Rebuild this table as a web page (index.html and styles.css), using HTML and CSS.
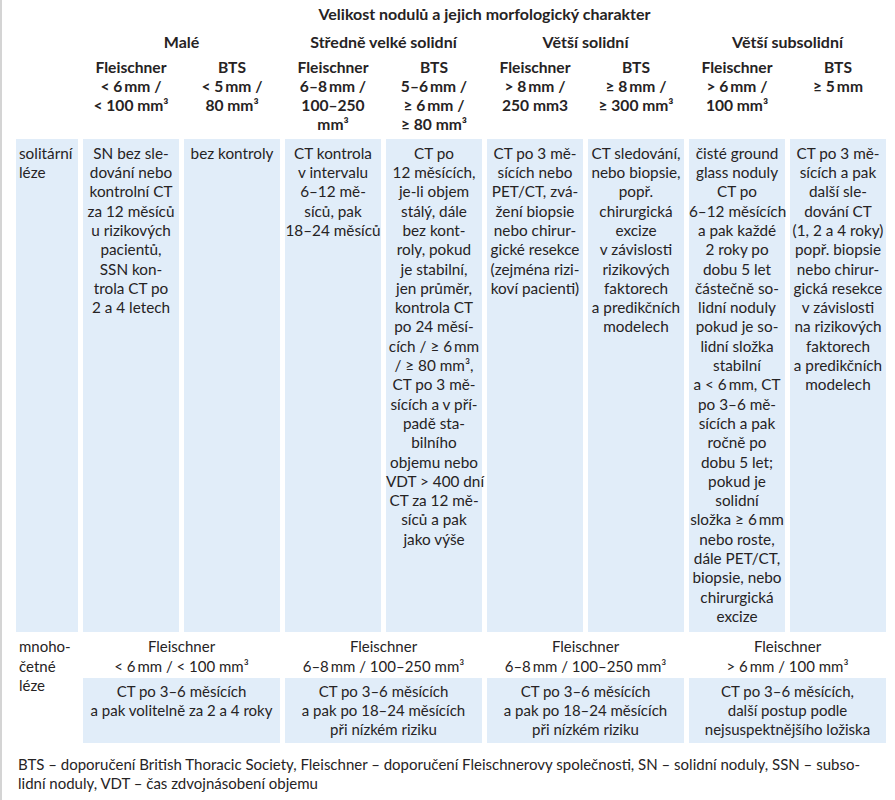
FILE: index.html
```html
<!DOCTYPE html>
<html lang="cs">
<head>
<meta charset="utf-8">
<title>Velikost nodulů</title>
<link rel="stylesheet" href="styles.css">
</head>
<body>
<div class="page">
  <div class="grid">
    <div class="title span2-9">Velikost nodulů a jejich morfologický charakter</div>

    <div class="group c2">Malé</div>
    <div class="group c4">Středně velké solidní</div>
    <div class="group c6">Větší solidní</div>
    <div class="group c8">Větší subsolidní</div>

    <div class="sub c2s">Fleischner<br>&lt; 6&thinsp;mm /<br>&lt; 100 mm³</div>
    <div class="sub">BTS<br>&lt; 5&thinsp;mm /<br>80 mm³</div>
    <div class="sub">Fleischner<br>6–8&thinsp;mm /<br>100–250<br>mm³</div>
    <div class="sub">BTS<br>5–6&thinsp;mm /<br>≥ 6&thinsp;mm /<br>≥ 80 mm³</div>
    <div class="sub">Fleischner<br>&gt; 8&thinsp;mm /<br>250 mm3</div>
    <div class="sub">BTS<br>≥ 8&thinsp;mm /<br>≥ 300 mm³</div>
    <div class="sub">Fleischner<br>&gt; 6&thinsp;mm /<br>100 mm³</div>
    <div class="sub">BTS<br>≥ 5&thinsp;mm</div>

    <div class="cell label">solitární<br>léze</div>
    <div class="cell">SN bez sle-<br>dování nebo<br>kontrolní CT<br>za 12 měsíců<br>u rizikových<br>pacientů,<br>SSN kon-<br>trola CT po<br>2 a 4 letech</div>
    <div class="cell">bez kontroly</div>
    <div class="cell">CT kontrola<br>v intervalu<br>6–12 mě-<br>síců, pak<br>18–24 měsíců</div>
    <div class="cell">CT po<br>12 měsících,<br>je-li objem<br>stálý, dále<br>bez kont-<br>roly, pokud<br>je stabilní,<br>jen průměr,<br>kontrola CT<br>po 24 měsí-<br>cích / ≥ 6&thinsp;mm<br>/ ≥ 80 mm³,<br>CT po 3 mě-<br>sících a v pří-<br>padě sta-<br>bilního<br>objemu nebo<br>VDT &gt; 400 dní<br>CT za 12 mě-<br>síců a pak<br>jako výše</div>
    <div class="cell">CT po 3 mě-<br>sících nebo<br>PET/CT, zvá-<br>žení biopsie<br>nebo chirur-<br>gické resekce<br>(zejména rizi-<br>koví pacienti)</div>
    <div class="cell">CT sledování,<br>nebo biopsie,<br>popř.<br>chirurgická<br>excize<br>v závislosti<br>rizikových<br>faktorech<br>a predikčních<br>modelech</div>
    <div class="cell">čisté ground<br>glass noduly<br>CT po<br>6–12 měsících<br>a pak každé<br>2 roky po<br>dobu 5 let<br>částečně so-<br>lidní noduly<br>pokud je so-<br>lidní složka<br>stabilní<br>a &lt; 6&thinsp;mm, CT<br>po 3–6 mě-<br>sících a pak<br>ročně po<br>dobu 5 let;<br>pokud je<br>solidní<br>složka ≥ 6&thinsp;mm<br>nebo roste,<br>dále PET/CT,<br>biopsie, nebo<br>chirurgická<br>excize</div>
    <div class="cell">CT po 3 mě-<br>sících a pak<br>další sle-<br>dování CT<br>(1, 2 a 4 roky)<br>popř. biopsie<br>nebo chirur-<br>gická resekce<br>v závislosti<br>na rizikových<br>faktorech<br>a predikčních<br>modelech</div>

    <div class="mlabel">mnoho-<br>četné<br>léze</div>
    <div class="mhead c2">Fleischner<br>&lt; 6&thinsp;mm / &lt; 100 mm³</div>
    <div class="mhead c4">Fleischner<br>6–8&thinsp;mm / 100–250 mm³</div>
    <div class="mhead c6">Fleischner<br>6–8&thinsp;mm / 100–250 mm³</div>
    <div class="mhead c8">Fleischner<br>&gt; 6&thinsp;mm / 100 mm³</div>

    <div class="mcell c2">CT po 3–6 měsících<br>a pak volitelně za 2 a 4 roky</div>
    <div class="mcell c4">CT po 3–6 měsících<br>a pak po 18–24 měsících<br>při nízkém riziku</div>
    <div class="mcell c6">CT po 3–6 měsících<br>a pak po 18–24 měsících<br>při nízkém riziku</div>
    <div class="mcell c8">CT po 3–6 měsících,<br>další postup podle<br>nejsuspektnějšího ložiska</div>
  </div>
  <p class="note">BTS – doporučení British Thoracic Society, Fleischner – doporučení Fleischnerovy společnosti, SN – solidní noduly, SSN – subso-<br>lidní noduly, VDT – čas zdvojnásobení objemu</p>
</div>
</body>
</html>
```

FILE: styles.css
```css
html, body {
  margin: 0;
  padding: 0;
  background: #ffffff;
}
body {
  font-family: Lato, "Liberation Sans", sans-serif;
  font-size: 15px;
  line-height: 19.3px;
  color: #262324;
}
.page {
  border-left: 2px solid #d4d4d4;
  min-height: 800px;
  box-sizing: border-box;
  padding: 4px 0 0 14px;
}
.grid {
  display: grid;
  grid-template-columns: 62px repeat(8, 96px);
  column-gap: 5px;
  row-gap: 0;
}
.title {
  grid-column: 2 / 10;
  text-align: center;
  font-weight: bold;
  font-size: 16px;
  white-space: nowrap;
}
.group {
  grid-column: span 2;
  text-align: center;
  font-weight: bold;
  font-size: 16px;
  margin-top: 9px;
  white-space: nowrap;
}
.c2 { grid-column: 2 / 4; }
.c4 { grid-column: 4 / 6; }
.c6 { grid-column: 6 / 8; }
.c8 { grid-column: 8 / 10; }
.sub {
  text-align: center;
  font-weight: bold;
  font-size: 15.6px;
  margin-top: 6px;
  white-space: nowrap;
}
.c2s { grid-column: 2; }
.cell {
  background: #e1edf9;
  text-align: center;
  padding: 5px 0 6px;
  margin-top: 4px;
  white-space: nowrap;
  font-size: 15.3px;
}
.cell.label {
  grid-column: 1;
  text-align: left;
  padding-left: 3px;
}
.mlabel {
  grid-column: 1;
  grid-row: span 2;
  padding-left: 3px;
  margin-top: 5px;
  white-space: nowrap;
}
.mhead {
  text-align: center;
  margin-top: 5px;
  white-space: nowrap;
}
.mcell {
  background: #e1edf9;
  text-align: center;
  padding: 4px 0 3px;
  margin-top: 2px;
  white-space: nowrap;
}
.note {
  margin: 12px 0 0 2px;
  white-space: nowrap;
}
```
